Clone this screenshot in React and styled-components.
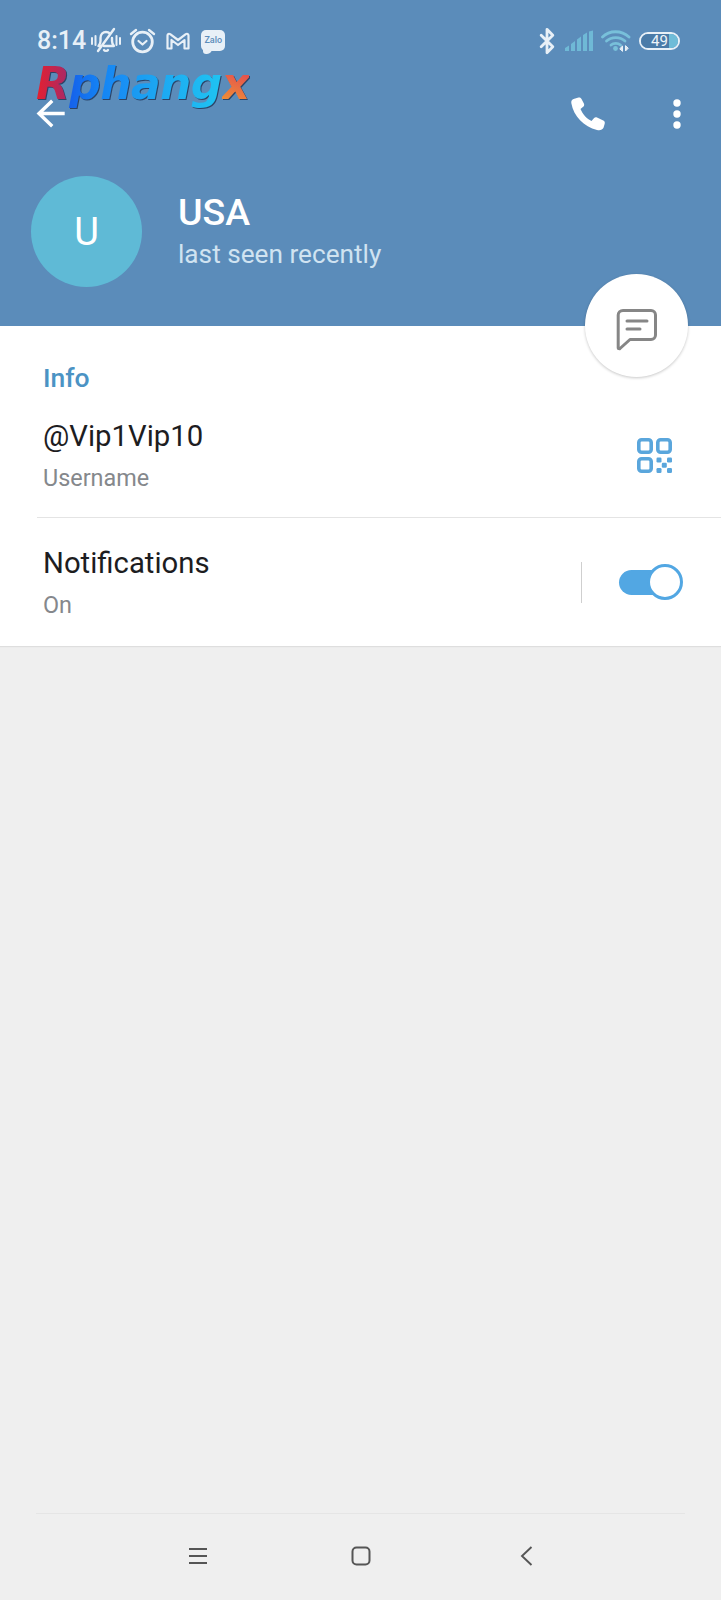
import React from 'react'
import styled, { createGlobalStyle } from 'styled-components'
import { Bluetooth } from 'lucide-react'

const GlobalStyle = createGlobalStyle`
    html, body {
        margin: 0;
        padding: 0;
        background: #efefef;
    }
    * {
        box-sizing: border-box;
    }
`

const Screen = styled.div`
    position: relative;
    width: 721px;
    height: 1600px;
    display: flex;
    flex-direction: column;
    overflow: hidden;
    background: #efefef;
    font-family: Roboto, "Liberation Sans", sans-serif;
`

const Header = styled.header`
    position: relative;
    height: 326px;
    flex: none;
    background: #5b8cba;
    color: #fff;
    padding: 26px 0 0 0;
`

const StatusBar = styled.div`
    height: 30px;
    display: flex;
    align-items: center;
    justify-content: space-between;
    padding: 0 41px 0 37px;
`

const StatusGroup = styled.div`
    display: flex;
    align-items: center;
    gap: ${p => p.$gap || 0}px;
`

const Clock = styled.span`
    font-size: 25px;
    line-height: 30px;
    font-weight: 500;
    color: #e8f0f7;
    margin-right: -3px;
`

const Battery = styled.div`
    position: relative;
    width: 41px;
    height: 18px;
    border: 2px solid #e8f0f7;
    border-radius: 9px;
    overflow: hidden;
    display: flex;
    align-items: center;
    justify-content: center;
    font-size: 15px;
    line-height: 14px;
    color: #eef4f9;
    &::before {
        content: '';
        position: absolute;
        left: 0;
        top: 0;
        bottom: 0;
        width: 28px;
        background: #4a7ba8;
    }
    &::after {
        content: '';
        position: absolute;
        left: 28px;
        top: 0;
        bottom: 0;
        right: 0;
        background: #6fbcd8;
    }
`

const BatteryText = styled.span`
    position: relative;
    z-index: 1;
`

const BluetoothSlot = styled.div`
    display: flex;
    margin-right: -4px;
`

const ZaloBadge = styled.div`
    position: relative;
    width: 24px;
    height: 21px;
    background: #e8f0f7;
    border-radius: 5px;
    color: #5b8cba;
    font-size: 9px;
    font-weight: 500;
    line-height: 20px;
    text-align: center;
    margin: -2px 0 0 3px;
    &::after {
        content: '';
        position: absolute;
        left: 2px;
        bottom: -3px;
        width: 9px;
        height: 5px;
        background: #e8f0f7;
        border-radius: 0 0 5px 3px;
    }
`

const Watermark = styled.div`
    position: absolute;
    left: 36px;
    top: 56px;
    font-family: "DejaVu Sans", sans-serif;
    font-size: 44px;
    line-height: 56px;
    font-weight: 700;
    font-style: italic;
    letter-spacing: -0.6px;
    white-space: nowrap;
    filter: drop-shadow(1px 1px 0 #2b4468);
`

const Mark = styled.span`
    background: linear-gradient(${p => p.$angle || 90}deg, ${p => p.$from}, ${p => p.$to});
    -webkit-background-clip: text;
    background-clip: text;
    color: transparent;
`

const Toolbar = styled.div`
    height: 60px;
    margin-top: 28px;
    display: flex;
    align-items: center;
    justify-content: space-between;
    padding: 0 39px 0 36px;
`

const ToolActions = styled.div`
    display: flex;
    align-items: center;
    gap: 66px;
`

const Profile = styled.div`
    display: flex;
    align-items: center;
    gap: 36px;
    margin-top: 32px;
    padding-left: 31px;
`

const Avatar = styled.div`
    width: 111px;
    height: 111px;
    border-radius: 50%;
    background: #5fbad6;
    display: flex;
    align-items: center;
    justify-content: center;
    font-size: 38px;
    font-weight: 400;
`

const ProfileText = styled.div`
    display: flex;
    flex-direction: column;
    margin-top: -4px;
`

const Name = styled.div`
    font-size: 37.5px;
    line-height: 42px;
    font-weight: 500;
`

const LastSeen = styled.div`
    font-size: 26.2px;
    line-height: 30px;
    margin-top: 6px;
    color: #d0e3f1;
`

const Fab = styled.div`
    position: absolute;
    left: 585px;
    top: 274px;
    width: 103px;
    height: 103px;
    padding-top: 8px;
    border-radius: 50%;
    background: #fff;
    box-shadow: 0 1px 3px rgba(0, 0, 0, 0.22);
    display: flex;
    align-items: center;
    justify-content: center;
    z-index: 2;
`

const Card = styled.section`
    flex: none;
    height: 320px;
    background: #fff;
    box-shadow: 0 1px 1px rgba(0, 0, 0, 0.07);
    padding-top: 36px;
    display: flex;
    flex-direction: column;
`

const SectionTitle = styled.div`
    font-size: 26.5px;
    line-height: 32px;
    font-weight: 500;
    color: #4b93c4;
    padding-left: 43px;
`

const Row = styled.div`
    height: ${p => p.$height}px;
    display: flex;
    align-items: flex-start;
    justify-content: space-between;
    padding: ${p => p.$top}px 0 0 43px;
`

const Separator = styled.div`
    height: 1px;
    margin-left: 37px;
    background: #e4e4e4;
`

const RowText = styled.div`
    display: flex;
    flex-direction: column;
`

const RowTitle = styled.div`
    font-size: 29.3px;
    line-height: 36px;
    color: #1d1d1f;
`

const RowSub = styled.div`
    font-size: 23.4px;
    line-height: 28px;
    margin-top: 10px;
    color: #85888c;
`

const QrSlot = styled.div`
    margin: 20px 49px 0 0;
    line-height: 0;
`

const SwitchSlot = styled.div`
    display: flex;
    align-items: center;
    margin: 17px 39px 0 0;
`

const VDivider = styled.div`
    width: 1px;
    height: 41px;
    background: #cfcfcf;
    margin-right: 37px;
`

const Toggle = styled.div`
    position: relative;
    width: 63px;
    height: 25px;
    border-radius: 13px;
    background: #52a7e3;
`

const Thumb = styled.div`
    position: absolute;
    right: -1px;
    top: -6px;
    width: 36px;
    height: 36px;
    border-radius: 50%;
    background: #fff;
    border: 3px solid #52a7e3;
`

const Filler = styled.div`
    flex: 1;
`

const NavBar = styled.nav`
    flex: none;
    height: 87px;
    margin: 0 36px;
    border-top: 1.5px solid #e5e5e5;
    display: grid;
    grid-template-columns: 163px 165px 20px;
    justify-content: start;
    padding: 27px 0 0 152px;
`

const NavSlot = styled.div`
    height: 30px;
    width: 20px;
    display: flex;
    align-items: center;
    justify-content: center;
`

const BellOff = () => (
    <svg width="30" height="28" viewBox="0 0 30 28" fill="none" stroke="#e8f0f7" strokeWidth="2.4" strokeLinecap="round" strokeLinejoin="round">
        <path d="M9 19H7.500c1.500-1.500 2-3 2-5v-3c0-3.500 2.500-6 5.500-6 1.500 0 3 .6 4 1.600" />
        <path d="M21 11v3c0 2 .5 3.500 2 5H13" />
        <path d="M13 23c.6 1.200 3.400 1.200 4 0" />
        <path d="M7 24 23 2" />
        <path d="M1 11v6M4.500 9v9M25.500 9v9M29 11v6" strokeWidth="2" />
    </svg>
)

const AlarmClock = () => (
    <svg width="27" height="26" viewBox="0 0 27 26" fill="none" stroke="#e8f0f7" strokeLinecap="round" strokeLinejoin="round">
        <circle cx="13.500" cy="14" r="9.800" strokeWidth="2.800" />
        <path d="M9.500 13l4 3.500 4-3.500" strokeWidth="2.200" />
        <path d="M2 6l5-4M25 6l-5-4" strokeWidth="2.400" />
    </svg>
)

const MailM = () => (
    <svg width="26" height="18" viewBox="-2 0 26 18" fill="none" stroke="#e8f0f7" strokeWidth="2.200" strokeLinejoin="round">
        <path d="M1.500 16.500V3.500c0-1.500 1.500-2.200 2.700-1.400L12 8l7.800-5.900c1.200-.8 2.700-.1 2.700 1.400v13h-4V8L12 13 5.500 8v8.500z" />
    </svg>
)

const Signal = () => (
    <svg width="28" height="22" viewBox="0 0 28 22" fill="#6fb9d6">
        <path d="M0 21v-3l4-2.500V21zM6 21v-7l4-3v10zM12 21V9.500l4-3V21zM18 21V5l4-2.500V21zM24 21V1.500l4-1V21z" />
    </svg>
)

const Wifi = () => (
    <svg width="30" height="24" viewBox="0 0 30 24" fill="none" stroke="#78c0da" strokeWidth="2.800" strokeLinecap="round">
        <path d="M1.500 8C8.500 1 20.500 1 28 8" />
        <path d="M5.500 12c5-4.600 13.500-4.600 18.500 0" />
        <path d="M10 16c2.600-2.200 7-2.200 9.500 0" />
        <circle cx="14.500" cy="19.500" r="2.400" fill="#78c0da" stroke="none" />
        <path d="M21.500 22v-5L19 19.500zM24.500 17v5l2.500-2.500z" fill="#e8f0f7" stroke="#e8f0f7" strokeWidth="1" />
    </svg>
)

const BackArrow = () => (
    <svg width="30" height="30" viewBox="0 0 30 30" fill="none" stroke="#fff" strokeWidth="3.400" strokeLinecap="square">
        <path d="M27 14.500H4M15 3 3 14.500 15 26" />
    </svg>
)

const Phone = () => (
    <svg width="36" height="36" viewBox="0 0 36 36" fill="#fff">
        <path d="M8.500 1.500 3.500 3C1.500 3.800 1 5.500 1.400 7.500 3.500 20 14 31 27 34c3 .6 5.500 0 6.500-2.200l1.200-4c.4-1.400-.2-2.600-1.400-3.200l-6.300-3c-1.100-.5-2.300-.2-3.100.7l-2.400 2.700C17 23 12.500 18 10.500 13l2.700-2.200c.9-.8 1.200-2 .8-3.100L11.500 3C11 1.700 9.800 1.100 8.500 1.500z" />
    </svg>
)

const Dots = () => (
    <svg width="10" height="32" viewBox="0 0 10 32" fill="#fff">
        <circle cx="5" cy="5" r="3.700" />
        <circle cx="5" cy="16" r="3.700" />
        <circle cx="5" cy="27" r="3.700" />
    </svg>
)

const ChatIcon = () => (
    <svg width="42" height="42" viewBox="0 0 42 42" fill="none" stroke="#868686" strokeWidth="3" strokeLinecap="round" strokeLinejoin="round">
        <path d="M7 1.500h28c2.500 0 4.500 2 4.500 4.500v20c0 2.500-2 4.500-4.500 4.500H14L4 39.500c-.6.500-1.800.2-1.800-.6V6c0-2.500 2-4.500 4.800-4.500z" />
        <path d="M11 12h20M11 20h13" />
    </svg>
)

const QrIcon = () => (
    <svg width="35" height="35" viewBox="0 0 35 35" fill="none" stroke="#5aa6dc" strokeWidth="3.600">
        <rect x="1.800" y="1.800" width="12.400" height="12.400" rx="2.800" />
        <rect x="20.800" y="1.800" width="12.400" height="12.400" rx="2.800" />
        <rect x="1.800" y="20.800" width="12.400" height="12.400" rx="2.800" />
        <g fill="#5aa6dc" stroke="none">
            <rect x="19.500" y="19.500" width="5" height="5" rx="1.200" />
            <rect x="30" y="19.500" width="5" height="5" rx="1.200" />
            <rect x="24.800" y="24.800" width="5" height="5" rx="1.200" />
            <rect x="19.500" y="30" width="5" height="5" rx="1.200" />
            <rect x="30" y="30" width="5" height="5" rx="1.200" />
        </g>
    </svg>
)

const MenuIcon = () => (
    <svg width="20" height="18" viewBox="0 0 20 18" fill="none" stroke="#555" strokeWidth="1.800">
        <path d="M1 2h18M1 9h18M1 16h18" />
    </svg>
)

const HomeIcon = () => (
    <svg width="20" height="20" viewBox="0 0 20 20" fill="none" stroke="#555" strokeWidth="2">
        <rect x="1.500" y="1.500" width="17" height="17" rx="4" />
    </svg>
)

const BackIcon = () => (
    <svg width="13" height="20" viewBox="0 0 13 20" fill="none" stroke="#555" strokeWidth="1.900">
        <path d="M11.500 1 2 10l9.500 9" />
    </svg>
)

export default function App() {
    return (
        <Screen>
            <GlobalStyle />
            <Header>
                <StatusBar>
                    <StatusGroup $gap={8}>
                        <Clock>8:14</Clock>
                        <BellOff />
                        <AlarmClock />
                        <MailM />
                        <ZaloBadge>Zalo</ZaloBadge>
                    </StatusGroup>
                    <StatusGroup $gap={8}>
                        <BluetoothSlot>
                            <Bluetooth size={28} color="#e8f0f7" strokeWidth={2.4} />
                        </BluetoothSlot>
                        <Signal />
                        <Wifi />
                        <Battery><BatteryText>49</BatteryText></Battery>
                    </StatusGroup>
                </StatusBar>
                <Watermark>
                    <Mark $from="#e5202e" $to="#a52a6a">R</Mark>
                    <Mark $from="#1560ea" $to="#1484f4">p</Mark>
                    <Mark $from="#1484f4" $to="#1a94f4">h</Mark>
                    <Mark $from="#1a98f2" $to="#1ca8f2">a</Mark>
                    <Mark $from="#1ca8f2" $to="#1eb6f2">n</Mark>
                    <Mark $from="#1eb6f2" $to="#1fc4f2">g</Mark>
                    <Mark $from="#f0a030" $to="#e0325a" $angle={20}>x</Mark>
                </Watermark>
                <Toolbar>
                    <BackArrow />
                    <ToolActions>
                        <Phone />
                        <Dots />
                    </ToolActions>
                </Toolbar>
                <Profile>
                    <Avatar>U</Avatar>
                    <ProfileText>
                        <Name>USA</Name>
                        <LastSeen>last seen recently</LastSeen>
                    </ProfileText>
                </Profile>
                <Fab><ChatIcon /></Fab>
            </Header>
            <Card>
                <SectionTitle>Info</SectionTitle>
                <Row $height={123} $top={24}>
                    <RowText>
                        <RowTitle>@Vip1Vip10</RowTitle>
                        <RowSub>Username</RowSub>
                    </RowText>
                    <QrSlot><QrIcon /></QrSlot>
                </Row>
                <Separator />
                <Row $height={127} $top={27}>
                    <RowText>
                        <RowTitle>Notifications</RowTitle>
                        <RowSub>On</RowSub>
                    </RowText>
                    <SwitchSlot>
                        <VDivider />
                        <Toggle><Thumb /></Toggle>
                    </SwitchSlot>
                </Row>
            </Card>
            <Filler />
            <NavBar>
                <NavSlot><MenuIcon /></NavSlot>
                <NavSlot><HomeIcon /></NavSlot>
                <NavSlot><BackIcon /></NavSlot>
            </NavBar>
        </Screen>
    )
}
